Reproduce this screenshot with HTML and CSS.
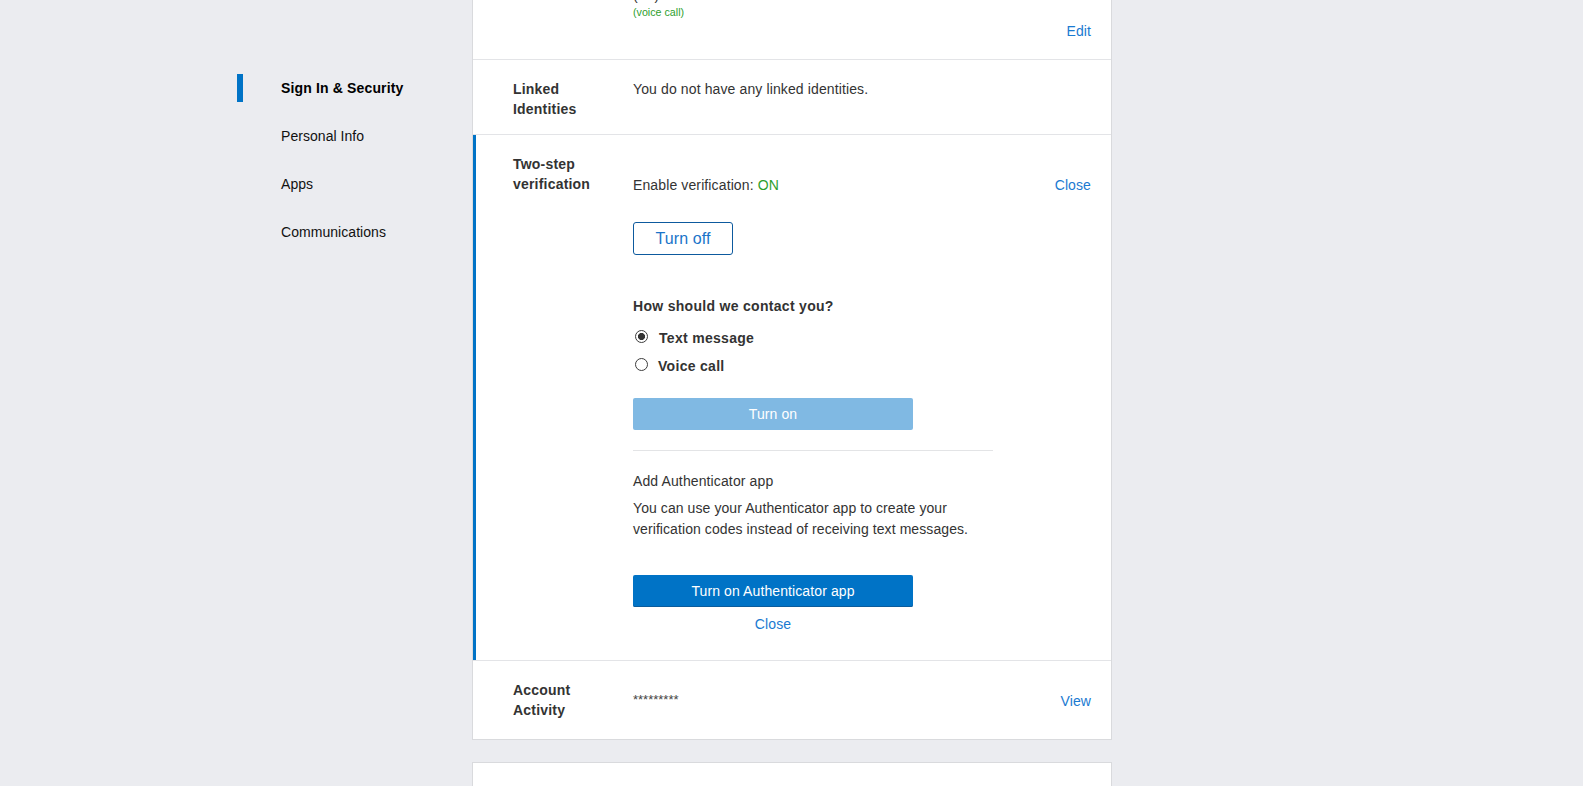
FILE: index.html
```html
<!DOCTYPE html>
<html lang="en">
<head>
<meta charset="utf-8">
<title>Account security</title>
<link rel="stylesheet" href="styles.css">
</head>
<body>
<div class="page">
  <nav class="sidenav">
    <a class="nav-item is-active" href="#"><span class="nav-bar"></span><span class="nav-text">Sign In &amp; Security</span></a>
    <a class="nav-item" href="#"><span class="nav-bar"></span><span class="nav-text">Personal Info</span></a>
    <a class="nav-item" href="#"><span class="nav-bar"></span><span class="nav-text">Apps</span></a>
    <a class="nav-item" href="#"><span class="nav-bar"></span><span class="nav-text">Communications</span></a>
  </nav>

  <main class="main">
    <section class="card">
      <div class="row row-phone">
        <div class="row-label"></div>
        <div class="row-value">
          <div class="phone">(***) ***-**42</div>
          <div class="phone-note">(voice call)</div>
        </div>
        <div class="row-action row-action-below"><a class="link" href="#">Edit</a></div>
      </div>

      <div class="row">
        <div class="row-label">Linked Identities</div>
        <div class="row-value">You do not have any linked identities.</div>
        <div class="row-action"></div>
      </div>

      <div class="row row-open">
        <div class="row-label">Two-step verification</div>
        <div class="row-value row-value-offset">
          <div class="status">Enable verification: <span class="status-on">ON</span></div>
          <button class="btn-outline" type="button">Turn off</button>

          <div class="contact-title">How should we contact you?</div>
          <div class="option option-first">
            <span class="radio is-checked"></span>
            <span class="option-text">Text message</span>
          </div>
          <div class="option">
            <span class="radio"></span>
            <span class="option-text option-text-voice">Voice call</span>
          </div>
          <button class="btn-wide btn-disabled" type="button">Turn on</button>

          <div class="divider"></div>

          <div class="auth-title">Add Authenticator app</div>
          <p class="auth-text">You can use your Authenticator app to create your<br>verification codes instead of receiving text messages.</p>
          <button class="btn-wide btn-primary" type="button">Turn on Authenticator app</button>
          <div class="close-under"><a class="link" href="#">Close</a></div>
        </div>
        <div class="row-action row-action-offset"><a class="link" href="#">Close</a></div>
      </div>

      <div class="row row-last">
        <div class="row-label">Account Activity</div>
        <div class="row-value row-value-small"><span class="masked">*********</span></div>
        <div class="row-action row-action-small"><a class="link" href="#">View</a></div>
      </div>
    </section>

    <section class="card card-next"></section>
  </main>
</div>
</body>
</html>
```

FILE: styles.css
```css
* {
  box-sizing: border-box;
}

html, body {
  margin: 0;
  padding: 0;
}

body {
  background: #ebecf0;
  font-family: "Liberation Sans", Arial, sans-serif;
  font-size: 14px;
  line-height: 20px;
  color: #333333;
  overflow: hidden;
}

.page {
  display: flex;
  align-items: flex-start;
  padding-left: 237px;
}

/* Sidebar */
.sidenav {
  width: 235px;
  flex: none;
  display: flex;
  flex-direction: column;
  gap: 20px;
  margin-top: 74px;
}

.nav-item {
  display: flex;
  align-items: center;
  gap: 38px;
  height: 28px;
  color: #111111;
  text-decoration: none;
  font-size: 14px;
  letter-spacing: 0.05px;
}

.nav-bar {
  width: 6px;
  height: 28px;
  flex: none;
}

.nav-item.is-active .nav-bar {
  background: #0073c6;
}

.nav-item.is-active .nav-text {
  font-weight: bold;
  color: #000000;
  letter-spacing: 0.15px;
}

/* Main column */
.main {
  width: 640px;
  flex: none;
  margin-top: -36px;
}

.card {
  background: #ffffff;
  border: 1px solid #d9dadd;
}

.card-next {
  margin-top: 22px;
  height: 120px;
}

.row {
  display: grid;
  grid-template-columns: 120px 1fr auto;
  padding: 19px 20px 15px 40px;
  border-bottom: 1px solid #e3e4e7;
}

.row-last {
  border-bottom: none;
  padding-bottom: 19px;
}

.row-label {
  width: 100px;
  font-weight: bold;
  color: #333333;
  letter-spacing: 0.2px;
}

.row-value {
  color: #333333;
  letter-spacing: 0.12px;
}

.row-action {
  text-align: right;
  letter-spacing: 0.1px;
}

.link {
  color: #1a7ad1;
  text-decoration: none;
}

/* Row 1 (phone) */
.row-phone {
  padding-top: 20px;
  padding-bottom: 18px;
}

.phone {
  line-height: 20px;
}

.phone-note {
  margin-top: 1px;
  font-size: 10.7px;
  line-height: 13px;
  color: #2ea02e;
  letter-spacing: 0;
}

.row-action-below {
  grid-column: 3;
  grid-row: 2;
  margin-top: 2px;
}

/* Row 3 (two-step, open) */
.row-open {
  box-shadow: inset 3px 0 0 #0073c6;
  padding-bottom: 26px;
}

.row-value-offset {
  padding-top: 21px;
}

.row-action-offset {
  padding-top: 21px;
}

.status-on {
  color: #2c9e2c;
}

.btn-outline {
  display: block;
  margin-top: 27px;
  width: 100px;
  height: 33px;
  padding: 0;
  background: #ffffff;
  border: 1px solid #0d5a9e;
  border-radius: 3px;
  color: #1a74c9;
  font-family: "Liberation Sans", Arial, sans-serif;
  font-size: 16px;
  line-height: 31px;
  letter-spacing: 0.1px;
}

.contact-title {
  margin-top: 41px;
  font-weight: bold;
  letter-spacing: 0.3px;
}

.option {
  display: flex;
  align-items: flex-start;
  margin-top: 8px;
}

.option-first {
  margin-top: 12px;
}

.radio {
  width: 13px;
  height: 13px;
  margin: 2px 0 0 2px;
  border: 1px solid #3c3c3c;
  border-radius: 50%;
  background: #ffffff;
  flex: none;
}

.radio.is-checked {
  background: radial-gradient(circle, #333333 0 3.3px, #ffffff 3.8px);
}

.option-text {
  margin-left: 11px;
  font-weight: bold;
  letter-spacing: 0.3px;
}

.option-text-voice {
  margin-left: 10px;
}

.btn-wide {
  display: block;
  width: 280px;
  height: 32px;
  padding: 0;
  border: none;
  border-radius: 2px;
  color: #ffffff;
  font-family: "Liberation Sans", Arial, sans-serif;
  font-size: 14px;
  line-height: 32px;
  letter-spacing: 0.1px;
}

.btn-disabled {
  margin-top: 22px;
  background: #80b9e3;
}

.btn-primary {
  margin-top: 35px;
  background: #0073c6;
  box-shadow: inset 0 -1px 0 #0b5c9c;
}

.divider {
  margin-top: 20px;
  width: 360px;
  height: 1px;
  background: #e3e4e6;
}

.auth-title {
  margin-top: 20px;
}

.auth-text {
  margin: 7px 0 0;
  line-height: 21px;
  letter-spacing: 0.08px;
}

.close-under {
  width: 280px;
  margin-top: 7px;
  text-align: center;
}

/* Row 4 (account activity) */
.row-value-small {
  padding-top: 9px;
}

.masked {
  font-size: 13px;
  color: #444444;
  letter-spacing: 0;
}

.row-action-small {
  padding-top: 11px;
}
```
